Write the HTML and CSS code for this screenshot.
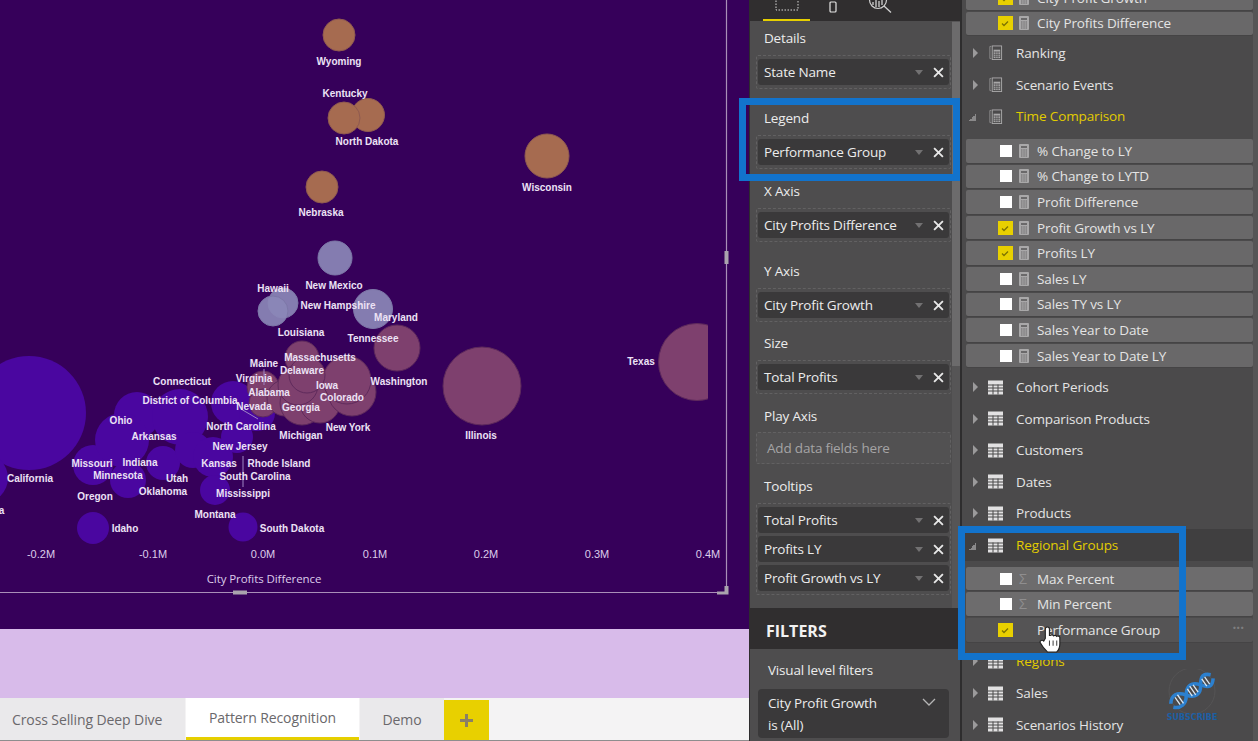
FILE: index.html
```html
<!DOCTYPE html>
<html lang="en">
<head>
<meta charset="utf-8">
<title>Pattern Recognition</title>
<link rel="stylesheet" href="styles.css">
</head>
<body>
<svg class="defs" width="0" height="0" aria-hidden="true">
  <symbol id="calc" viewBox="0 0 10 14">
    <rect x="0" y="0" width="10" height="14" rx="1" fill="#a9a8a9"/>
    <rect x="2" y="2" width="6" height="2" fill="#6a696a"/>
    <path d="M2 6h1.500M4.300 6h1.500M6.500 6h1.500M2 8h1.500M4.300 8h1.500M6.500 8h1.500M2 10h1.500M4.300 10h1.500M6.500 10h1.500M2 12h1.500M4.300 12h1.500M6.500 12h1.500" stroke="#6a696a" stroke-width="1"/>
  </symbol>
  <symbol id="calcgroup" viewBox="0 0 14 16">
    <path d="M2.500 1.500H1V14.500H2.500" fill="none" stroke="#8f8e8f" stroke-width="1"/>
    <rect x="3.500" y="1" width="10" height="14.500" fill="none" stroke="#a9a8a9" stroke-width="1"/>
    <rect x="5" y="5" width="7" height="9" fill="#a9a8a9"/>
    <path d="M5 7.500h7M5 10h7M5 12h7M7.300 7v7M9.700 7v7" stroke="#4b4a4b" stroke-width=".7"/>
  </symbol>
  <symbol id="table" viewBox="0 0 15 14">
    <rect x="0" y="0" width="15" height="14" fill="#e2e1e2"/>
    <path d="M0 4.500h15M0 7.500h15M0 10.500h15M5 4v10M10 4v10" stroke="#4b4a4b" stroke-width="1"/>
  </symbol>
  <symbol id="tick" viewBox="0 0 14 14">
    <path d="M4 7.500l2 2 4-4" fill="none" stroke="#7d7300" stroke-width="1.300"/>
  </symbol>
  <symbol id="xmark" viewBox="0 0 10 10">
    <path d="M1 1l8 8M9 1l-8 8" stroke="#e8e8e8" stroke-width="1.700"/>
  </symbol>
</svg>

<div class="app">
  <main class="report">
    <div class="canvas">
      <svg class="chart" width="749" height="629" viewBox="0 0 749 629">
        <defs><clipPath id="plot"><rect x="-30" y="0" width="738" height="629"/></clipPath></defs>
        <g clip-path="url(#plot)">
          <g class="purple">
            <circle cx="29" cy="413" r="57"/><circle cx="-17" cy="478" r="25"/>
            <circle cx="93" cy="465" r="20"/><circle cx="93" cy="528" r="16"/>
            <circle cx="243" cy="527" r="14.500"/><circle cx="137" cy="415" r="23"/>
            <circle cx="122" cy="440" r="27"/><circle cx="128" cy="480" r="18"/>
            <circle cx="163" cy="463" r="17"/><circle cx="180" cy="417" r="28"/>
            <circle cx="193" cy="450" r="18"/><circle cx="213" cy="457" r="20"/>
            <circle cx="215" cy="490" r="15"/><circle cx="233" cy="403" r="22"/>
            <circle cx="257" cy="413" r="18"/><circle cx="237" cy="437" r="16"/>
          </g>
          <g class="tan">
            <circle cx="339" cy="35" r="16"/><circle cx="368" cy="115" r="16.500"/>
            <circle cx="344" cy="118" r="16"/><circle cx="547" cy="156" r="22"/>
            <circle cx="322" cy="187" r="16"/>
          </g>
          <g class="blue">
            <circle cx="335" cy="258" r="17"/><circle cx="283" cy="303" r="15"/>
            <circle cx="273" cy="311" r="15"/><circle cx="373" cy="309" r="19.500"/>
          </g>
          <g class="pink">
            <circle cx="397" cy="348" r="23"/><circle cx="482" cy="386" r="39"/>
            <circle cx="697" cy="362" r="38.500"/><circle cx="263" cy="387" r="16"/>
            <circle cx="263" cy="403" r="14"/><circle cx="302" cy="358" r="17"/>
            <circle cx="285" cy="398" r="18"/><circle cx="302" cy="403" r="22"/>
            <circle cx="320" cy="403" r="20"/><circle cx="352" cy="392" r="24"/>
            <circle cx="347" cy="380" r="24"/><circle cx="298" cy="385" r="20"/>
            <circle cx="307" cy="375" r="18"/>
          </g>
        </g>
        <path class="leader" d="M243 456V487M241 409L258 419M264 369V385"/>
        <g class="labels">
          <text x="339" y="61">Wyoming</text><text x="345" y="93">Kentucky</text>
          <text x="367" y="141">North Dakota</text><text x="547" y="187">Wisconsin</text>
          <text x="321" y="212">Nebraska</text><text x="334" y="285">New Mexico</text>
          <text x="273" y="288">Hawaii</text><text x="338" y="305">New Hampshire</text>
          <text x="396" y="317">Maryland</text><text x="301" y="332">Louisiana</text>
          <text x="373" y="338">Tennessee</text><text x="641" y="361">Texas</text>
          <text x="320" y="357">Massachusetts</text><text x="264" y="363">Maine</text>
          <text x="302" y="370">Delaware</text><text x="254" y="378">Virginia</text>
          <text x="399" y="381">Washington</text><text x="182" y="381">Connecticut</text>
          <text x="327" y="385">Iowa</text><text x="269" y="392">Alabama</text>
          <text x="190" y="400">District of Columbia</text><text x="342" y="397">Colorado</text>
          <text x="254" y="406">Nevada</text><text x="301" y="407">Georgia</text>
          <text x="121" y="420">Ohio</text><text x="241" y="426">North Carolina</text>
          <text x="348" y="427">New York</text><text x="154" y="436">Arkansas</text>
          <text x="301" y="435">Michigan</text><text x="481" y="435">Illinois</text>
          <text x="240" y="446">New Jersey</text><text x="92" y="463">Missouri</text>
          <text x="140" y="462">Indiana</text><text x="219" y="463">Kansas</text>
          <text x="279" y="463">Rhode Island</text><text x="118" y="475">Minnesota</text>
          <text x="177" y="478">Utah</text><text x="255" y="476">South Carolina</text>
          <text x="30" y="478">California</text><text x="163" y="491">Oklahoma</text>
          <text x="95" y="496">Oregon</text><text x="243" y="493">Mississippi</text>
          <text x="-14" y="510">Arizona</text><text x="215" y="514">Montana</text>
          <text x="125" y="528">Idaho</text><text x="292" y="528">South Dakota</text>
        </g>
        <g class="ticks">
          <text x="41" y="554">-0.2M</text><text x="153" y="554">-0.1M</text>
          <text x="263" y="554">0.0M</text><text x="375" y="554">0.1M</text>
          <text x="486" y="554">0.2M</text><text x="597" y="554">0.3M</text>
          <text x="708" y="554">0.4M</text>
        </g>
        <text class="axis-title" x="264" y="578">City Profits Difference</text>
        <path class="select-line" d="M726.500 0V592.500H0"/>
        <rect class="handle" x="724.500" y="251" width="4" height="13"/>
        <rect class="handle" x="233" y="590.500" width="14" height="4"/>
        <path class="handle" d="M717 594.500V591.500H724.500V586H728.500V594.500Z"/>
      </svg>
    </div>
    <div class="band"></div>
    <nav class="tabs">
      <div class="tab tab-cross">Cross Selling Deep Dive</div>
      <div class="tab tab-active">Pattern Recognition</div>
      <div class="tab tab-demo">Demo</div>
      <div class="tab-add">
        <svg width="13" height="13" viewBox="0 0 13 13"><path d="M6.500 0V13M0 6.500H13" stroke="#8a8066" stroke-width="3"/></svg>
      </div>
    </nav>
  </main>

  <aside class="viz">
    <div class="viz-tabs">
      <div class="viz-underline"></div>
      <svg class="viz-ic1" width="24" height="12" viewBox="0 0 24 12"><rect x="1" y="-1" width="22" height="11" fill="none" stroke="#d8d8d8" stroke-dasharray="1.500 1.500"/></svg>
      <svg class="viz-ic2" width="8" height="12" viewBox="0 0 8 12"><rect x="1" y="1" width="6" height="10" rx="1" fill="none" stroke="#e4e4e4" stroke-width="1.200"/></svg>
      <svg class="viz-ic3" width="26" height="14" viewBox="0 0 26 14"><circle cx="10" cy="0" r="8.500" fill="none" stroke="#d0d0d0" stroke-width="1.200"/><path d="M5 2v3M8 0v7M11 1v6M14 -1v6M16 6l7 6.500" stroke="#d0d0d0" stroke-width="1.300" fill="none"/></svg>
    </div>
    <div class="viz-body">
      <div class="wells">
        <section class="sec sec-wide">
          <h3 class="lab">Details</h3>
          <div class="well">
            <div class="pill"><span class="pill-t">State Name</span><i class="caret"></i><svg class="x"><use href="#xmark"/></svg></div>
          </div>
        </section>
        <section class="sec">
          <h3 class="lab">Legend</h3>
          <div class="well">
            <div class="pill"><span class="pill-t">Performance Group</span><i class="caret"></i><svg class="x"><use href="#xmark"/></svg></div>
          </div>
        </section>
        <section class="sec sec-wide">
          <h3 class="lab">X Axis</h3>
          <div class="well">
            <div class="pill"><span class="pill-t">City Profits Difference</span><i class="caret"></i><svg class="x"><use href="#xmark"/></svg></div>
          </div>
        </section>
        <section class="sec sec-tight">
          <h3 class="lab">Y Axis</h3>
          <div class="well">
            <div class="pill"><span class="pill-t">City Profit Growth</span><i class="caret"></i><svg class="x"><use href="#xmark"/></svg></div>
          </div>
        </section>
        <section class="sec">
          <h3 class="lab">Size</h3>
          <div class="well">
            <div class="pill"><span class="pill-t">Total Profits</span><i class="caret"></i><svg class="x"><use href="#xmark"/></svg></div>
          </div>
        </section>
        <section class="sec">
          <h3 class="lab">Play Axis</h3>
          <div class="well well-empty">Add data fields here</div>
        </section>
        <section class="sec sec-last">
          <h3 class="lab">Tooltips</h3>
          <div class="well well-stack">
            <div class="pill"><span class="pill-t">Total Profits</span><i class="caret"></i><svg class="x"><use href="#xmark"/></svg></div>
            <div class="pill"><span class="pill-t">Profits LY</span><i class="caret"></i><svg class="x"><use href="#xmark"/></svg></div>
            <div class="pill"><span class="pill-t">Profit Growth vs LY</span><i class="caret"></i><svg class="x"><use href="#xmark"/></svg></div>
          </div>
        </section>
      </div>
      <div class="scroll"><div class="thumb"></div></div>
    </div>
    <div class="filters-head">FILTERS</div>
    <div class="filters-sub">Visual level filters</div>
    <div class="filter-card">
      <div>City Profit Growth<br>is (All)</div>
      <svg class="chev" width="14" height="8" viewBox="0 0 14 8"><path d="M1 1l6 6 6-6" fill="none" stroke="#b5b5b5" stroke-width="1.300"/></svg>
    </div>
  </aside>

  <aside class="fields">
    <div class="list">
      <div class="row"><span class="box on"><svg><use href="#tick"/></svg></span><svg class="fi"><use href="#calc"/></svg><span>City Profit Growth</span></div>
      <div class="row"><span class="box on"><svg><use href="#tick"/></svg></span><svg class="fi"><use href="#calc"/></svg><span>City Profits Difference</span></div>
      <div class="group"><i class="tri"></i><svg class="gi"><use href="#calcgroup"/></svg><span>Ranking</span></div>
      <div class="group"><i class="tri"></i><svg class="gi"><use href="#calcgroup"/></svg><span>Scenario Events</span></div>
      <div class="group group-open"><i class="tri-open"></i><svg class="gi"><use href="#calcgroup"/></svg><span>Time Comparison</span></div>
      <div class="rows rows-first">
        <div class="row"><span class="box"></span><svg class="fi"><use href="#calc"/></svg><span>% Change to LY</span></div>
        <div class="row"><span class="box"></span><svg class="fi"><use href="#calc"/></svg><span>% Change to LYTD</span></div>
        <div class="row"><span class="box"></span><svg class="fi"><use href="#calc"/></svg><span>Profit Difference</span></div>
        <div class="row"><span class="box on"><svg><use href="#tick"/></svg></span><svg class="fi"><use href="#calc"/></svg><span>Profit Growth vs LY</span></div>
        <div class="row"><span class="box on"><svg><use href="#tick"/></svg></span><svg class="fi"><use href="#calc"/></svg><span>Profits LY</span></div>
        <div class="row"><span class="box"></span><svg class="fi"><use href="#calc"/></svg><span>Sales LY</span></div>
        <div class="row"><span class="box"></span><svg class="fi"><use href="#calc"/></svg><span>Sales TY vs LY</span></div>
        <div class="row"><span class="box"></span><svg class="fi"><use href="#calc"/></svg><span>Sales Year to Date</span></div>
        <div class="row"><span class="box"></span><svg class="fi"><use href="#calc"/></svg><span>Sales Year to Date LY</span></div>
      </div>
      <div class="group"><i class="tri"></i><svg class="gi"><use href="#table"/></svg><span>Cohort Periods</span></div>
      <div class="group"><i class="tri"></i><svg class="gi"><use href="#table"/></svg><span>Comparison Products</span></div>
      <div class="group"><i class="tri"></i><svg class="gi"><use href="#table"/></svg><span>Customers</span></div>
      <div class="group"><i class="tri"></i><svg class="gi"><use href="#table"/></svg><span>Dates</span></div>
      <div class="group"><i class="tri"></i><svg class="gi"><use href="#table"/></svg><span>Products</span></div>
      <div class="group group-open group-dark"><i class="tri-open"></i><svg class="gi"><use href="#table"/></svg><span>Regional Groups</span></div>
      <div class="rows">
        <div class="row row-light"><span class="box"></span><span class="sigma">Σ</span><span>Max Percent</span></div>
        <div class="row row-light"><span class="box"></span><span class="sigma">Σ</span><span>Min Percent</span></div>
        <div class="row row-hover"><span class="box on"><svg><use href="#tick"/></svg></span><span class="noicon"></span><span>Performance Group</span><span class="dots">···</span></div>
      </div>
      <div class="group group-open"><i class="tri"></i><svg class="gi"><use href="#table"/></svg><span>Regions</span></div>
      <div class="group"><i class="tri"></i><svg class="gi"><use href="#table"/></svg><span>Sales</span></div>
      <div class="group"><i class="tri"></i><svg class="gi"><use href="#table"/></svg><span>Scenarios History</span></div>
    </div>
  </aside>

  <div class="hl hl-legend"></div>
  <div class="hl hl-groups"></div>

  <svg class="cursor" width="23" height="27" viewBox="0 0 22 26">
    <path d="M6 12V3a2 2 0 0 1 4 0v6l1 0a2 2 0 0 1 3 .5a2 2 0 0 1 3 .5a2 2 0 0 1 3 1v6c0 4-2 7-3 8H8c-2-2-6-7-7-9c-.5-2 2-3 3.500-1.500Z" fill="#fff" stroke="#222" stroke-width="1.100"/>
    <path d="M10 14v5M13.500 14v5M17 14v5" stroke="#444" stroke-width="1"/>
  </svg>

  <div class="logo">
    <svg width="56" height="46" viewBox="0 0 56 46">
      <circle cx="28" cy="22" r="23" fill="none" stroke="#555455" stroke-width="1"/>
      <g transform="translate(28 22) rotate(-35) scale(.88)">
        <path d="M-28 -2C-22 -10 -14 -9 -8 0S6 9 12 0S22 -9 28 -3" fill="none" stroke="#2c80cf" stroke-width="4"/>
        <path d="M-28 3C-22 9 -14 9 -8 0S6 -9 12 0S22 9 28 2" fill="none" stroke="#2c80cf" stroke-width="4"/>
        <path d="M-20 -5V5M-16 -6V6M-3 -5V5M1 -6V6M5 -5V5M17 -5V5M21 -5V5" stroke="#d8e6f2" stroke-width="1.500"/>
      </g>
    </svg>
    <span class="logo-t">SUBSCRIBE</span>
  </div>
</div>
</body>
</html>
```

FILE: styles.css
```css
* { box-sizing: border-box; }
html, body { margin: 0; padding: 0; }
body { width: 1258px; height: 741px; overflow: hidden; font-family: "Open Sans", "Noto Sans", sans-serif; background: #4b4a4b; }
.defs { position: absolute; }
.app { position: relative; display: flex; width: 1258px; height: 741px; overflow: hidden; }

/* report */
.report { width: 749px; flex: none; display: flex; flex-direction: column; }
.canvas { height: 629px; background: #36005a; flex: none; }
.chart { display: block; font-family: "Liberation Sans", sans-serif; }
.purple circle { fill: #4a06a0; }
.tan circle { fill: #a66b50; stroke: #8f5a50; stroke-width: 1; }
.blue circle { fill: #8b87b7; fill-opacity: .92; stroke: #7d78a8; stroke-width: 1; }
.pink circle { fill: #7e406e; stroke: #5f2a5c; stroke-width: 1; }
.leader { stroke: #9f86c4; stroke-width: 1; fill: none; }
.labels text { font-size: 10px; font-weight: 700; fill: #ece2f5; text-anchor: middle; dominant-baseline: central; }
.ticks text { font-size: 11px; fill: #dccdea; text-anchor: middle; dominant-baseline: central; }
.axis-title { font-family: "Open Sans", sans-serif; font-size: 11.500px; letter-spacing: -.08px; fill: #dccdea; text-anchor: middle; dominant-baseline: central; }
.select-line { fill: none; stroke: #a98fb8; stroke-width: 1.200; }
.handle { fill: #aaa3ad; }
.band { height: 69px; flex: none; background: #d8bbea; }
.tabs { height: 43px; flex: none; display: flex; background: #f4f3f4; border-bottom: 1px solid #8e8d8e; font-size: 14px; letter-spacing: -.1px; color: #6a686b; }
.tab { display: flex; align-items: center; background: #eae9eb; margin-right: 1px; }
.tab-cross { width: 185px; padding-left: 12px; }
.tab-active { width: 173px; justify-content: center; background: #fff; border-bottom: 3px solid #e6cf00; }
.tab-demo { width: 84px; justify-content: center; margin-right: 0; }
.tab-add { width: 45px; margin-top: 2px; display: flex; align-items: center; justify-content: center; background: #e8d000; }

/* visualizations */
.viz { width: 213px; flex: none; background: #4e4d4e; border-left: 1px solid #2e2d2e; border-right: 2px solid #2e2d2e; display: flex; flex-direction: column; color: #ececec; font-size: 13.500px; letter-spacing: -.18px; }
.viz-tabs { position: relative; height: 21px; flex: none; background: #302e2f; overflow: hidden; }
.viz-underline { position: absolute; left: 13px; bottom: 0; width: 47px; height: 2px; background: #e6cf00; }
.viz-ic1 { position: absolute; left: 25px; top: 0; }
.viz-ic2 { position: absolute; left: 79px; top: 1px; }
.viz-ic3 { position: absolute; left: 118px; top: 0; }
.viz-body { display: flex; height: 587px; flex: none; }
.wells { width: 202px; flex: none; padding: 7px 1px 0 6px; }
.scroll { flex: 1; background: #565556; }
.thumb { height: 344px; background: #6c6b6c; margin-top: 1px; }
.sec { margin-bottom: 12px; }
.sec-wide { margin-bottom: 19px; }
.sec-tight { margin-bottom: 11px; }
.sec-last { margin-bottom: 0; }
.lab { margin: 0 0 7px; padding-left: 8px; font-size: 13.500px; line-height: 20px; font-weight: 400; }
.well { border: 1px dashed #626162; padding: 3px 1px; border-radius: 2px; }
.well-empty { margin-top: -1px; height: 32px; padding: 0 0 0 10px; display: flex; align-items: center; color: #a5a4a5; background: #525152; }
.well-stack { display: flex; flex-direction: column; gap: 3px; }
.pill { height: 26px; background: #3a393a; border-radius: 3px; display: flex; align-items: center; padding-left: 6px; }
.pill-t { flex: 1; white-space: nowrap; }
.caret { width: 0; height: 0; border-left: 4.500px solid transparent; border-right: 4.500px solid transparent; border-top: 5px solid #727172; margin-right: 10px; }
.x { width: 11px; height: 11px; margin-right: 5px; flex: none; }
.filters-head { height: 41px; flex: none; padding-top: 5px; padding-left: 16px; display: flex; align-items: center; background: #302e2f; font-size: 16px; letter-spacing: 0; font-weight: 700; color: #f2f2f2; }
.filters-sub { margin: 11px 0 9px; padding-left: 18px; line-height: 20px; flex: none; }
.filter-card { position: relative; margin-left: 8px; width: 191px; height: 49px; flex: none; background: #3a393a; border-radius: 4px; padding: 3px 10px; line-height: 22px; }
.chev { position: absolute; right: 13px; top: 9px; }

/* fields */
.fields { flex: 1; position: relative; background: linear-gradient(90deg, #4b4a4b 291px, #565556 291px); overflow: hidden; color: #e4e4e4; font-size: 13.500px; letter-spacing: -.12px; }
.list { margin-top: -14px; }
.row { display: flex; align-items: center; width: 287px; height: 23.600px; margin: 0 0 2px 4px; padding-left: 34px; background: #696869; border-radius: 2px; box-shadow: 0 1px 0 #454445; white-space: nowrap; position: relative; }
.row-light { background: #6d6c6d; }
.row-hover { background: #555455; }
.box { width: 12px; height: 12px; background: #fff; margin-right: 7px; flex: none; display: block; }
.box.on { width: 15px; height: 14px; margin-left: -2px; margin-right: 6px; background: #e8d000; }
.box svg { display: block; width: 14px; height: 14px; }
.fi { width: 10px; height: 14px; margin-right: 8px; flex: none; }
.sigma { width: 10px; margin-right: 8px; flex: none; color: #8f8e8f; font-size: 14px; line-height: 1; }
.noicon { width: 10px; margin-right: 8px; flex: none; }
.dots { position: absolute; right: 9px; top: 1px; color: #7f7e7f; font-weight: 700; letter-spacing: 0; }
.group { display: flex; align-items: center; height: 31.600px; padding-left: 11px; white-space: nowrap; }
.group-open { color: #e2cc00; }
.group-dark { background: #403f40; width: 291px; }
.rows { padding: 6px 0 2px; }
.rows-first { padding-top: 7px; }
.tri { width: 0; height: 0; border-left: 5px solid #9b9a9b; border-top: 5px solid transparent; border-bottom: 5px solid transparent; margin-right: 10px; flex: none; }
.tri-open { width: 7px; height: 7px; margin: 2px 12px 0 -4px; background: linear-gradient(135deg, transparent 50%, #8a898a 50%); flex: none; }
.gi { width: 15px; height: 15px; margin-right: 13px; flex: none; }

/* overlays */
.hl { position: absolute; border: 7px solid #1273cc; pointer-events: none; }
.hl-legend { left: 739px; top: 98px; width: 221px; height: 83px; }
.hl-groups { left: 958px; top: 526px; width: 228px; height: 134px; }
.cursor { position: absolute; left: 1039px; top: 626px; }
.logo { position: absolute; left: 1163px; top: 669px; width: 58px; display: flex; flex-direction: column; align-items: center; }
.logo-t { margin-top: -2px; font-family: "DejaVu Sans", sans-serif; font-size: 8px; font-weight: 700; letter-spacing: 0; color: #1c5fa3; line-height: 9px; }
```
